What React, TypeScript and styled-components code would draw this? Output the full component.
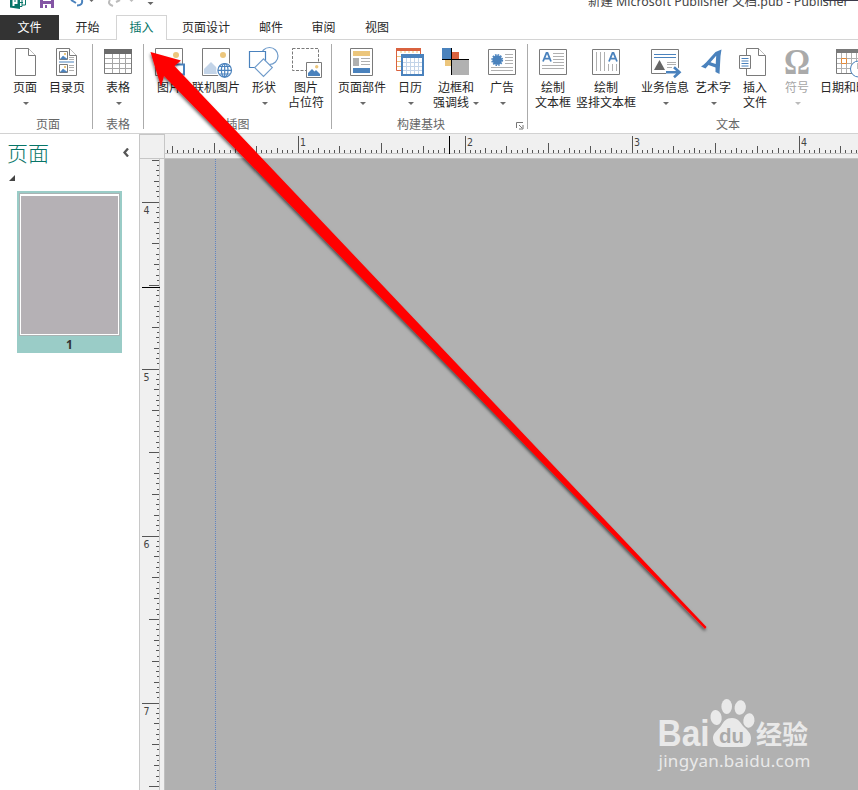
import React from "react";
import styled, { createGlobalStyle, css } from "styled-components";

const teal = "#077568";
const blue = "#4a82bd";
const grey = "#7a7a7a";
const tan = "#ecc67c";
const red = "#d9623f";
const ui = `"Noto Sans", "Noto Sans CJK SC", sans-serif`;

const GlobalStyle = createGlobalStyle`
  * { box-sizing: border-box; }
  html, body { margin: 0; padding: 0; overflow: hidden; background: #fff; }
`;

const Window = styled.div`
  position: relative;
  width: 858px;
  height: 790px;
  overflow: hidden;
  display: flex;
  flex-direction: column;
  background: #fff;
  color: #262626;
  font: 12px/15px "Noto Sans CJK SC", sans-serif;
`;

const TitleBar = styled.header`
  height: 15px;
  flex: none;
  display: flex;
  justify-content: space-between;
  overflow: hidden;
`;

const QuickAccess = styled.svg`
  width: 170px;
  height: 15px;
`;

const Title = styled.div`
  width: 270px;
  height: 15px;
  margin-top: -7px;
  font: 12.4px/18px ${ui};
  color: #444;
  white-space: nowrap;
`;

const TabStrip = styled.nav`
  height: 25px;
  flex: none;
  display: flex;
  border-bottom: 1px solid #d4d4d4;
`;

const Tab = styled.div<{ $w: number; $kind?: "file" | "active" }>`
  width: ${(p) => p.$w}px;
  height: 24px;
  line-height: 23px;
  text-align: center;
  ${(p) => p.$kind === "file" && css`background: #333; color: #fff; height: 25px;`}
  ${(p) =>
    p.$kind === "active" &&
    css`
      height: 25px;
      background: #fff;
      color: ${teal};
      border: 1px solid #d4d4d4;
      border-bottom: 0;
      line-height: 21px;
    `}
`;

const Ribbon = styled.section`
  height: 94px;
  flex: none;
  display: flex;
  padding-top: 4px;
  border-bottom: 1px solid #d2d2d2;
  overflow: hidden;
`;

const Group = styled.div<{ $w: number; $pad?: number; $last?: boolean }>`
  width: ${(p) => p.$w}px;
  flex: none;
  height: 85px;
  padding-left: ${(p) => p.$pad ?? 0}px;
  border-right: ${(p) => (p.$last ? "0" : "1px solid #ababab")};
  display: flex;
  flex-direction: column;
`;

const Buttons = styled.div`
  display: flex;
  height: 72px;
  flex: none;
  padding-top: 2px;
`;

const GroupFooter = styled.div<{ $shift?: number }>`
  display: flex;
  flex: none;
  justify-content: center;
  padding-left: ${(p) => p.$shift ?? 0}px;
  height: 15px;
  color: #666;
  white-space: nowrap;
`;

const Launcher = styled.svg`
  width: 9px;
  height: 9px;
  margin: 5px 3px 0 auto;
`;

const FooterLabel = styled.span`
  margin-left: 59px;
`;

const ButtonBox = styled.div<{ $w: number; $disabled?: boolean }>`
  width: ${(p) => p.$w}px;
  flex: none;
  display: flex;
  flex-direction: column;
  align-items: center;
  white-space: nowrap;
  color: ${(p) => (p.$disabled ? "#a6a6a6" : "#262626")};
`;

const Glyph = styled.svg`
  width: 32px;
  height: 32px;
  margin-bottom: 1px;
  flex: none;
  overflow: visible;
`;

const Line = styled.div`
  height: 15px;
  display: flex;
  align-items: center;
  gap: 2px;
`;

const Caret = styled.i<{ $disabled?: boolean }>`
  margin: 3px 0 0 2px;
  border: 3px solid transparent;
  border-top-color: ${(p) => (p.$disabled ? "#bbb" : "#6a6a6a")};
  border-bottom: 0;
`;

const Workspace = styled.main`
  flex: 1;
  display: flex;
  min-height: 0;
`;

const Pane = styled.aside`
  width: 139px;
  flex: none;
  display: flex;
  flex-direction: column;
`;

const PaneHeader = styled.div`
  display: flex;
  justify-content: space-between;
  align-items: center;
  height: 36px;
  padding: 0 10px 0 7px;
  font-size: 21px;
  font-weight: 300;
  color: ${teal};
`;

const Chevron = styled.svg`
  width: 6px;
  height: 9px;
  margin-top: 1px;
`;

const Expander = styled.div`
  width: 0;
  height: 0;
  margin: 5px 0 0 9px;
  border-left: 6px solid transparent;
  border-bottom: 6px solid #444;
`;

const Thumb = styled.div`
  width: 105px;
  height: 162px;
  margin: 10px 0 0 17px;
  padding: 2px 2px 0;
  background: #9accc7;
  text-align: center;
  font: bold 12px/17px "Noto Sans", sans-serif;
  color: #333;
`;

const Sheet = styled.div`
  width: 101px;
  height: 143px;
  border: 1px solid #a9b3b3;
  padding: 1px;
  background: #b5b1b5;
  box-shadow: inset 0 0 0 1px #fff, inset 0 2px 0 #fff;
`;

const Editor = styled.div`
  flex: 1;
  display: grid;
  grid-template: 25px 1fr / 26px 1fr;
  min-width: 0;
`;

const Corner = styled.div`
  background: #f0f0f0;
  border: 1px solid #c6c6c6;
`;

const TopRuler = styled.svg`
  width: 693px;
  height: 25px;
  background: #f0f0f0;
`;

const SideRuler = styled.svg`
  width: 26px;
  height: 631px;
  background: #f0f0f0;
`;

const Canvas = styled.div`
  background: #b1b1b1;
  padding-left: 50px;
`;

const Guide = styled.div`
  width: 1px;
  height: 100%;
  background: repeating-linear-gradient(#5f83c2 0 1px, #b1b1b1 1px 2px);
`;

const Overlay = styled.svg`
  position: absolute;
  inset: 0;
  width: 858px;
  height: 790px;
`;

const RulerText = styled.text`
  font: 10.5px "DejaVu Sans Condensed", "DejaVu Sans", sans-serif;
  fill: #444;
`;

type Tick = { pos: number; level: number };

/* 32 divisions per unit; level 0 is a whole unit, level 5 the finest. */
function ticks(major: number, from: number, to: number): Tick[] {
  const out: Tick[] = [];
  for (let i = -64; i < 160; i++) {
    const pos = Math.floor(major + (i * 167) / 32);
    if (pos < from || pos >= to) continue;
    let level = 5;
    for (let l = 0; l < 5; l++) {
      if (i % (32 >> l) === 0) {
        level = l;
        break;
      }
    }
    out.push({ pos, level });
  }
  return out;
}

const Horizontal = () => (
  <TopRuler shapeRendering="crispEdges">
    {ticks(133, 1, 693).map(({ pos, level }) => {
      const h = [17, 10, 7, 5, 3, 3][level];
      return <rect key={pos} x={pos} y={19 - h} width={1} height={h} fill="#555" />;
    })}
    <rect y={19} width={693} height={1} fill="#c6c6c6" />
    <rect y={24} width={693} height={1} fill="#c3c3c3" />
    <rect x={284} y={2} width={1} height={18} fill="#000" />
    {[1, 2, 3, 4].map((n) => (
      <RulerText key={n} x={135 + (n - 1) * 167} y={12}>{n}</RulerText>
    ))}
  </TopRuler>
);

const Vertical = () => (
  <SideRuler shapeRendering="crispEdges">
    <rect width={1} height={631} fill="#c8c8c8" />
    {ticks(43, 1, 631).map(({ pos, level }) => {
      const w = [17, 10, 7, 5, 3, 2][level];
      return <rect key={pos} x={20 - w} y={pos} width={w} height={1} fill="#555" />;
    })}
    <rect x={20} width={1} height={631} fill="#c6c6c6" />
    <rect x={25} width={1} height={631} fill="#c0c0c0" />
    <rect x={3} y={128} width={18} height={1} fill="#000" />
    {[4, 5, 6, 7].map((n) => (
      <RulerText key={n} x={4.5} y={55 + (n - 4) * 167}>{n}</RulerText>
    ))}
  </SideRuler>
);

const Frame = () => <path d="M2.5 3.5h27v25h-27z" fill="#fff" stroke={grey} />;
const Fold = ({ x = 6.5, w = 20 }) => (
  <g fill="#fff" stroke={grey}>
    <path d={`M${x} 2.5h${w - 7}l7 7v20h-${w}z`} />
    <path d={`M${x + w - 7} 2.5v7h7`} />
  </g>
);
const LetterA = ({ x }: { x: number }) => (
  <path d={`M${x} 15.5l3.5 -8.5h1l3.5 8.5M${x + 1.5} 12.7h5`} fill="none" stroke={blue} strokeWidth="1.8" />
);

const icons: Record<string, React.ReactNode> = {
  page: <Fold />,
  toc: (
    <>
      <Fold x={5.5} />
      <path d="M8.5 5.5h8v8h-8zM8.5 18.5h8v8h-8z" fill="#fff" stroke={grey} />
      <path d="M9.5 13l2.5-3 4 3zM9.5 26l2.5-3 4 3z" fill={blue} stroke={blue} strokeWidth=".6" />
      <path d="M13 7h2v2h-2zM13 20h2v2h-2z" fill={tan} />
      <path d="M8 16h15" stroke={blue} />
      <path d="M18 11.5h5M18 13.5h5M18 19.5h5M18 21.5h5M18 24.5h5" stroke="#b0b0b0" />
    </>
  ),
  table: (
    <>
      <path d="M2.5 3.5h27v24h-27z" fill="#fff" stroke={grey} />
      <path d="M2 3h28v5H2z" fill="#6b6b6b" />
      <path d="M3 12.5h26M3 17.5h26M3 22.5h26M10.5 8v19M17.5 8v19M23.5 8v19" stroke="#a6a6a6" />
    </>
  ),
  picture: (
    <>
      <path d="M2.5 2.5h27v27h-27z" fill="#fff" stroke={grey} />
      <circle cx="23" cy="9" r="3" fill={tan} />
      <path d="M17 18.5h14v10H17z" fill="#fff" stroke={blue} strokeWidth="2" />
    </>
  ),
  online: (
    <>
      <path d="M2.5 2.5h27v27h-27z" fill="#fff" stroke={grey} />
      <path d="M4 28v-5l7-7 5 5 3 7z" fill="#c3d4e8" />
      <circle cx="23" cy="9" r="3" fill={tan} />
      <circle cx="24.7" cy="24.3" r="8.5" fill="#fff" />
      <g fill="none" stroke={blue} strokeWidth="1.2">
        <circle cx="24.7" cy="24.3" r="6.8" />
        <ellipse cx="24.7" cy="24.3" rx="3.3" ry="6.8" />
        <path d="M18 24.3h13.5M24.7 17.5V31M19.5 20.5h10.5M19.5 28h10.5" />
      </g>
    </>
  ),
  shapes: (
    <g fill="#fff" stroke="#6f9bca" strokeWidth="1.2">
      <circle cx="21.5" cy="10" r="8.5" />
      <path d="M1.5 5.5h16v16h-16z" stroke={blue} />
      <path d="M15.5 12.8l8.8 8.8-8.8 8.8-8.8-8.8z" />
    </g>
  ),
  placeholder: (
    <>
      <path d="M2.5 2.5h26v22h-26z" fill="none" stroke={grey} strokeDasharray="3 1.5" />
      <path d="M16.5 16.5h15v15h-15z" fill="#fff" stroke={grey} />
      <path d="M18 30v-3l4-4 7 7z" fill={blue} />
      <path d="M24 26l2-2 4 4v2h-2z" fill={blue} />
      <circle cx="26.7" cy="20.7" r="1.7" fill={tan} />
    </>
  ),
  parts: (
    <>
      <path d="M4.5 2.5h22v27h-22z" fill="#fff" stroke={grey} />
      <path d="M7 5h17v5H7z" fill={tan} />
      <path d="M7 12h6v8H7z" fill="#b0b0b0" />
      <path d="M15 12.5h9M15 15.5h9M15 18.5h9" stroke="#b0b0b0" />
      <path d="M7 22h17v5H7z" fill={blue} />
    </>
  ),
  calendar: (
    <>
      <path d="M2.5 4.5h24v20h-24z" fill="#fff" stroke={red} />
      <path d="M2 2h25v3H2z" fill={red} />
      <path d="M7 5v2M11 5v2M15 5v2M19 5v2M23 5v2M3 10.5h4M3 15.5h4M3 20.5h4" stroke={tan} />
      <path d="M8 9h21v20H8z" fill="#fff" stroke={blue} strokeWidth="2" />
      <path d="M7 8h23v4H7z" fill={blue} />
      <path d="M9 16.5h19M9 20.5h19M9 24.5h19M12.5 12v16M16.5 12v16M20.5 12v16M24.5 12v16" stroke="#c3d4e8" />
    </>
  ),
  borders: (
    <>
      <path d="M2 2h9v11H2z" fill={blue} />
      <path d="M12 6h7v7h-7z" fill={red} />
      <path d="M5 14h6v6H5z" fill={tan} />
      <path d="M12 14h17v15H12z" fill="#b1b1b1" />
      <path d="M11.5 2v27M2 13.5h27" stroke="#000" />
    </>
  ),
  ads: (
    <>
      <Frame />
      <circle cx="11.2" cy="14" r="4.8" fill={blue} />
      <circle cx="11.2" cy="14" r="5.2" fill="none" stroke={blue} strokeWidth="1.5" strokeDasharray="1.6 1.1" />
      <path d="M19 8.5h8M19 11.5h8M19 14.5h8M19 17.5h8M5 21.5h22M5 24.5h22" stroke="#b0b0b0" />
    </>
  ),
  textbox: (
    <>
      <Frame />
      <LetterA x={6} />
      <path d="M16 7.5h11M16 10.5h11M16 13.5h11M16 16.5h11M5 19.5h22M5 22.5h22" stroke="#b0b0b0" />
    </>
  ),
  vertical: (
    <>
      <Frame />
      <LetterA x={19} />
      <path d="M6.5 6v19M10.5 6v19M14.5 6v19M18.5 18v7M22.5 18v7M26.5 18v7" stroke="#b0b0b0" />
    </>
  ),
  business: (
    <>
      <path d="M2.5 3.5h27v24h-27z" fill="#fff" stroke={grey} />
      <path d="M5 8.5h22M5 11.5h22" stroke={blue} />
      <path d="M10.5 14L16 24H5z" fill="#666" />
      <path d="M18 16.5h9M18 18.5h9M18 21.5h5" stroke="#b0b0b0" />
      <path d="M17 26.3h13M24.5 20.8l6 5.5-6 5.5" fill="none" stroke="#fff" strokeWidth="5" />
      <path d="M17 26.3h13M25 21.3l5.5 5-5.5 5" fill="none" stroke={blue} strokeWidth="2.6" />
    </>
  ),
  wordart: (
    <path
      d="M4 20.5Q6 19.5 9 16.500L18.500 6 24.500 3.500 23.500 10 22.500 28 18.500 26V21.500L11.500 19 8.500 22.500zM13.500 16.200L18.700 18 19.200 9.700z"
      fill={blue}
      fillRule="evenodd"
    />
  ),
  insertFile: (
    <>
      <Fold x={7.5} w={19} />
      <path d="M.5 9.5h11v13H.5z" fill="#fff" stroke={grey} />
      <path d="M2.5 12.5h7M2.5 15h7M2.5 17.5h7M2.5 20h7" stroke={blue} />
    </>
  ),
  symbol: (
    <text x="16" y="28" textAnchor="middle" fill="#aaa" fontFamily="Liberation Serif, serif" fontWeight="bold" fontSize="35" textLength="26" lengthAdjust="spacingAndGlyphs">Ω</text>
  ),
  date: (
    <>
      <path d="M2.5 3.5h27v24h-27z" fill="#fff" stroke={grey} />
      <path d="M2 3h28v4H2z" fill={grey} />
      <path d="M3 12.5h26M3 17.5h26M3 22.5h26M7.5 7v20M12.5 7v20M17.5 7v20M22.5 7v20" stroke="#b0b0b0" />
      <path d="M7.5 12.5h5v5h-5z" fill="#fff" stroke="#e28a3b" />
      <circle cx="24.5" cy="23" r="8" fill="#fff" stroke={blue} />
      <path d="M24 17v6h5" fill="none" stroke={grey} />
    </>
  ),
};

type ItemProps = { w: number; icon: string; a: string; b?: string; caret?: boolean; disabled?: boolean };

const Item = ({ w, icon, a, b, caret, disabled }: ItemProps) => (
  <ButtonBox $w={w} $disabled={disabled}>
    <Glyph viewBox="0 0 32 32">{icons[icon]}</Glyph>
    <Line>{a}</Line>
    <Line>
      {b}
      {caret && <Caret $disabled={disabled} />}
    </Line>
  </ButtonBox>
);

const Watermark = () => (
  <g fill="#e9e9e9">
    <text x="657.5" y="746" fontFamily="Liberation Sans, sans-serif" fontWeight="bold" fontSize="36" textLength="52" lengthAdjust="spacingAndGlyphs">Bai</text>
    <ellipse cx="716" cy="717.5" rx="5.6" ry="7.5" transform="rotate(-8 716 717)" />
    <ellipse cx="726.7" cy="706.5" rx="5.3" ry="7.6" />
    <ellipse cx="740.3" cy="707.5" rx="5.6" ry="7.3" transform="rotate(10 740 707)" />
    <ellipse cx="749" cy="720.5" rx="5.6" ry="7.2" transform="rotate(8 749 720)" />
    <path d="M732 718c6 0 8 4 11 8 4 4 8 7 8 12 0 6-3 9-9 9H722c-6 0-9-4-9-9 0-5 5-8 8-12 3-5 5-8 11-8z" />
    <text x="719" y="743" fill="#aaa" fontFamily="Liberation Sans, sans-serif" fontWeight="bold" fontSize="21" textLength="25" lengthAdjust="spacingAndGlyphs">du</text>
    <text x="756" y="744" fontFamily="Noto Sans CJK SC, sans-serif" fontWeight="bold" fontSize="26" textLength="52">经验</text>
    <text x="658.5" y="766.5" fontFamily="Noto Sans, sans-serif" fontSize="17" textLength="152">jingyan.baidu.com</text>
  </g>
);

export default function App() {
  return (
    <>
      <GlobalStyle />
      <Window>
        <TitleBar>
          <QuickAccess>
            <path d="M10 0h10v9l-10-1.500z" fill={teal} />
            <path d="M13.500 6V0M13.500 3h3V0" fill="none" stroke="#fff" strokeWidth="2" />
            <path d="M20 6.500h2V0M22 5h3.500V0M20 2.500h3" fill="none" stroke={teal} />
            <path d="M40 0h14v8H40z" fill="#8455a5" />
            <path d="M43 0h8v1h-8zM43 4h8v4h-8z" fill="#fff" />
            <path d="M45 5h2v3h-2z" fill="#8455a5" />
            <path d="M71 0l5 3M77 5.500q6 0 5-5.500" fill="none" stroke={blue} strokeWidth="2" />
            <path d="M113 6q-6-2-3-6M116 2l4-2" fill="none" stroke="#bbb" strokeWidth="2" />
            <path d="M89.500 0h4l-2 2z" fill="#666" />
            <path d="M129.500 0h4l-2 2z" fill="#bbb" />
            <path d="M147.500 2h6l-3 3z" fill="#666" />
          </QuickAccess>
          <Title>新建 Microsoft Publisher 文档.pub - Publisher</Title>
        </TitleBar>
        <TabStrip>
          <Tab $w={59} $kind="file">文件</Tab>
          <Tab $w={57}>开始</Tab>
          <Tab $w={51} $kind="active">插入</Tab>
          <Tab $w={78}>页面设计</Tab>
          <Tab $w={52}>邮件</Tab>
          <Tab $w={53}>审阅</Tab>
          <Tab $w={54}>视图</Tab>
        </TabStrip>
        <Ribbon>
          <Group $w={93} $pad={4}>
            <Buttons>
              <Item w={42} icon="page" a="页面" caret />
              <Item w={42} icon="toc" a="目录页" />
            </Buttons>
            <GroupFooter>页面</GroupFooter>
          </Group>
          <Group $w={51}>
            <Buttons>
              <Item w={50} icon="table" a="表格" caret />
            </Buttons>
            <GroupFooter>表格</GroupFooter>
          </Group>
          <Group $w={188}>
            <Buttons>
              <Item w={50} icon="picture" a="图片" />
              <Item w={44} icon="online" a="联机图片" />
              <Item w={52} icon="shapes" a="形状" caret />
              <Item w={32} icon="placeholder" a="图片" b="占位符" />
            </Buttons>
            <GroupFooter>插图</GroupFooter>
          </Group>
          <Group $w={196} $pad={6}>
            <Buttons>
              <Item w={48} icon="parts" a="页面部件" caret />
              <Item w={48} icon="calendar" a="日历" caret />
              <Item w={44} icon="borders" a="边框和" b="强调线" caret />
              <Item w={48} icon="ads" a="广告" caret />
            </Buttons>
            <GroupFooter>
              <FooterLabel>构建基块</FooterLabel>
              <Launcher>
                <path d="M1.500 7V1.500H8M4 4l3 3M8 4v4H4" fill="none" stroke="#777" />
              </Launcher>
            </GroupFooter>
          </Group>
          <Group $w={380} $pad={2} $last>
            <Buttons>
              <Item w={46} icon="textbox" a="绘制" b="文本框" />
              <Item w={60} icon="vertical" a="绘制" b="竖排文本框" />
              <Item w={58} icon="business" a="业务信息" caret />
              <Item w={38} icon="wordart" a="艺术字" caret />
              <Item w={46} icon="insertFile" a="插入" b="文件" />
              <Item w={38} icon="symbol" a="符号" caret disabled />
              <Item w={68} icon="date" a="日期和时间" />
            </Buttons>
            <GroupFooter $shift={18}>文本</GroupFooter>
          </Group>
        </Ribbon>
        <Workspace>
          <Pane>
            <PaneHeader>
              页面
              <Chevron>
                <path d="M5 .5L1.500 4.500 5 8.500" fill="none" stroke="#555" strokeWidth="2.300" />
              </Chevron>
            </PaneHeader>
            <Expander />
            <Thumb>
              <Sheet />
              1
            </Thumb>
          </Pane>
          <Editor>
            <Corner />
            <Horizontal />
            <Vertical />
            <Canvas>
              <Guide />
            </Canvas>
          </Editor>
        </Workspace>
        <Overlay>
          <defs>
            <filter id="shadow" x="-5%" y="-5%" width="110%" height="110%">
              <feDropShadow dx="-0.500" dy="2" stdDeviation="1.500" floodColor="#000" floodOpacity="0.6" />
            </filter>
          </defs>
          <path d="M823 0h35v1h-35z" fill="#3b3a4a" />
          <Watermark />
          <path d="M150.500 52L181 60.500 174.500 66 706.500 627 705 629 164 76 161 86.500z" fill="#f00" filter="url(#shadow)" />
        </Overlay>
      </Window>
    </>
  );
}
